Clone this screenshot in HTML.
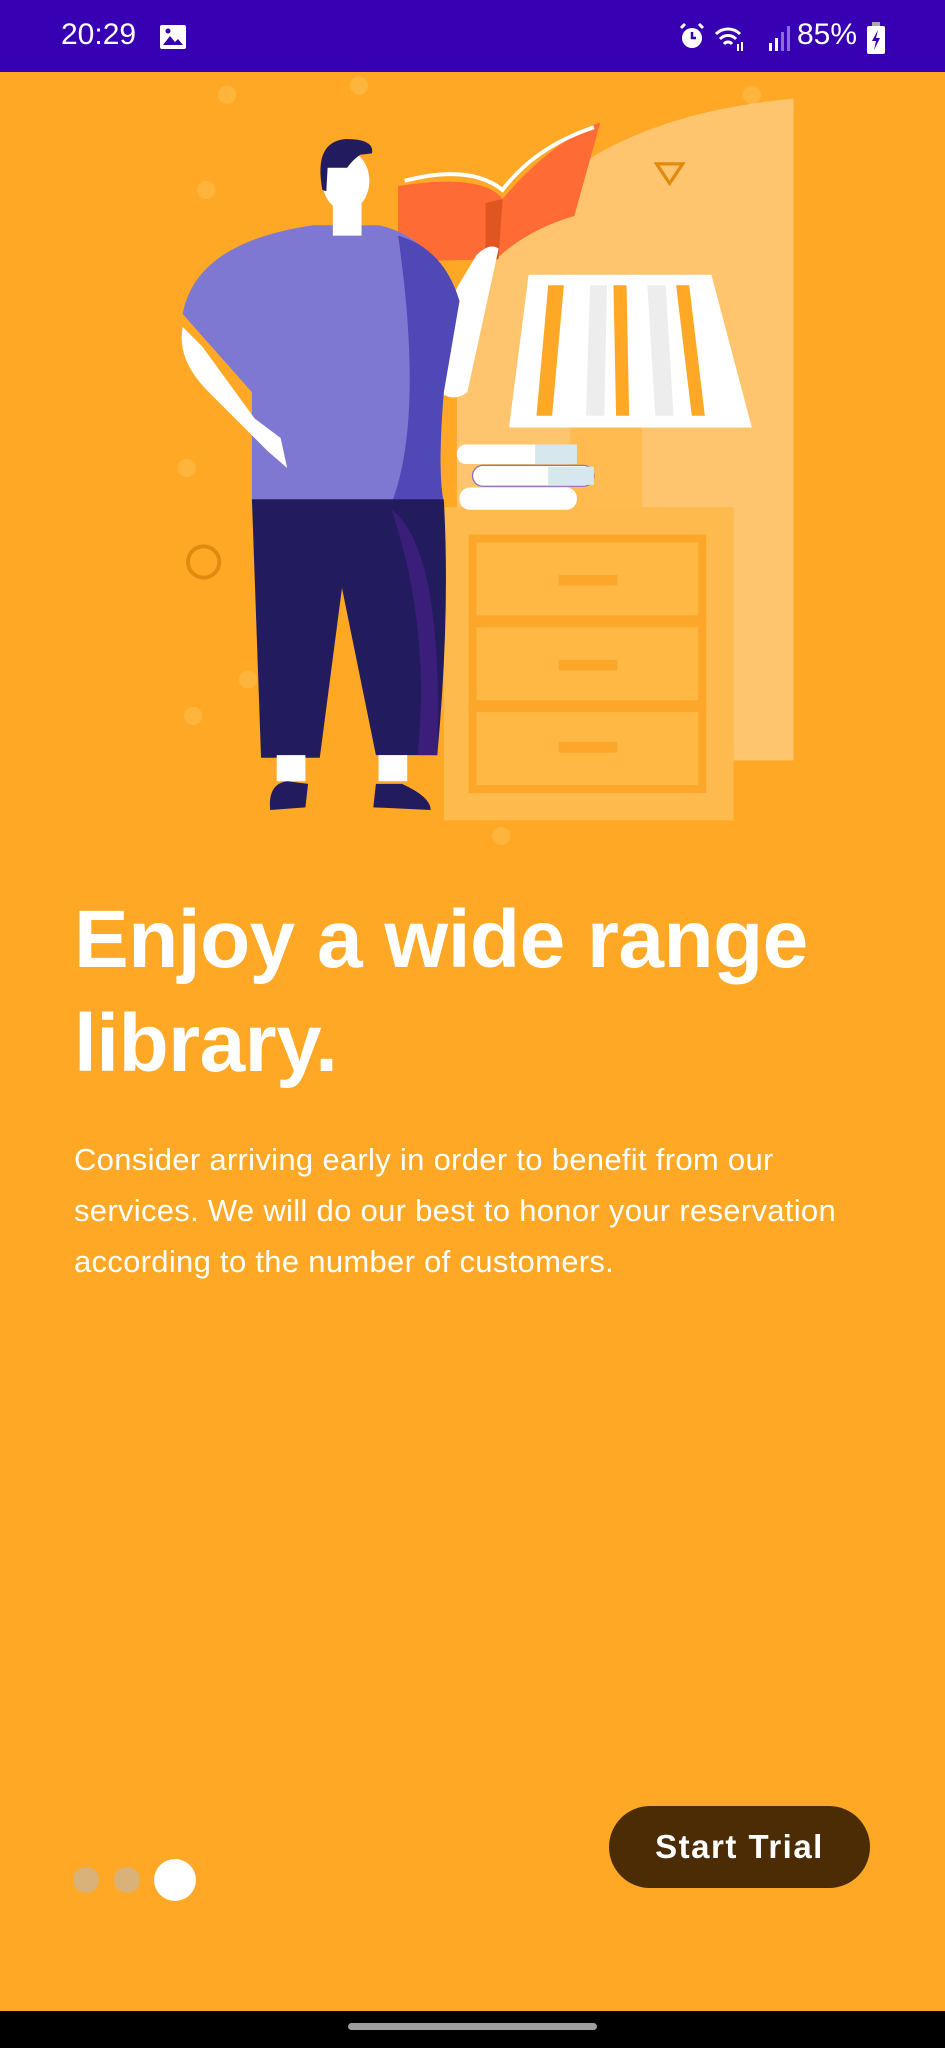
<!DOCTYPE html>
<html><head><meta charset="utf-8"><style>
html,body{margin:0;padding:0}
body{width:945px;height:2048px;position:relative;overflow:hidden;background:#FEA825;font-family:"Liberation Sans",Roboto,sans-serif;color:#fff}
.sb{position:absolute;left:0;top:0;width:945px;height:72px;background:#3700B3}
.t{position:absolute;left:61px;top:18px;font-size:30px;color:#fff}
.pct{position:absolute;left:797px;top:18px;font-size:30px}
h1{position:absolute;left:74px;top:888px;margin:0;font-size:82px;line-height:104px;font-weight:bold;letter-spacing:-0.5px}
p{position:absolute;left:74px;top:1134px;margin:0;font-size:31px;letter-spacing:0.3px;line-height:51px;width:870px;white-space:nowrap}
.btn{position:absolute;left:609px;top:1806px;width:261px;height:82px;border-radius:41px;background:#4B2C05;color:#fff;font-size:33px;font-weight:bold;letter-spacing:1.5px;text-align:center;line-height:82px}
.d{position:absolute;border-radius:50%}
.nav{position:absolute;left:0;top:2011px;width:945px;height:37px;background:#000}
.pill{position:absolute;left:348px;top:2023px;width:249px;height:7px;border-radius:4px;background:#9e9e9e}
</style></head><body>
<div class="sb"></div>
<div class="t">20:29</div>
<svg style="position:absolute;left:159px;top:24px" width="28" height="26" viewBox="0 0 28 26"><rect x="1" y="1" width="26" height="24" rx="2" fill="#fff"/><path d="M4 21 L11 12 L16 18 L19 15 L24 21Z" fill="#3700B3"/><circle cx="9" cy="7" r="2.5" fill="#3700B3"/></svg>
<svg style="position:absolute;left:676px;top:20px" width="120" height="34" viewBox="0 0 120 34">
<circle cx="16" cy="18" r="10" fill="#fff"/><path d="M16 12v6h4" stroke="#3700B3" stroke-width="2.5" fill="none"/><path d="M5 8l4-4M27 8l-4-4" stroke="#fff" stroke-width="3"/>
<path d="M40 14a17 17 0 0 1 24 0M44 19a11 11 0 0 1 16 0M48 24a5 5 0 0 1 8 0" stroke="#fff" stroke-width="3" fill="none"/>
<rect x="61" y="24" width="2" height="7" fill="#fff"/><rect x="65" y="22" width="2" height="9" fill="#fff"/>
<rect x="93" y="23" width="3" height="8" fill="#fff"/><rect x="99" y="18" width="3" height="13" fill="#fff"/><rect x="105" y="12" width="3" height="19" fill="#8a6fd0"/><rect x="111" y="6" width="3" height="25" fill="#8a6fd0"/>
</svg>
<div class="pct">85%</div>
<svg style="position:absolute;left:867px;top:22px" width="18" height="32" viewBox="0 0 18 32"><rect x="5" y="0" width="8" height="4" fill="#aaa"/><rect x="0" y="4" width="18" height="28" rx="2" fill="#fff"/><path d="M11 8 L5 19 H9 L7 28 L13 16 H9Z" fill="#3700B3"/></svg>

<svg style="position:absolute;left:0;top:0" width="945" height="2048" viewBox="0 0 724 1568">
<g fill="#FFB53C"><circle cx="174" cy="72" r="7"/><circle cx="275" cy="65" r="7"/><circle cx="158" cy="145" r="7"/><circle cx="576" cy="72" r="7"/><circle cx="143" cy="358" r="7"/><circle cx="190" cy="520" r="7"/><circle cx="148" cy="548" r="7"/><circle cx="384" cy="640" r="7"/></g>
<circle cx="156" cy="430" r="12" fill="none" stroke="#E08A10" stroke-width="3"/>
<path d="M350 582 L350 265 Q390 95 608 75 L608 582 Z" fill="#FFC56E"/>
<path d="M503 125 L523 125 L513 140Z" fill="none" stroke="#E08A10" stroke-width="2.5"/>
<rect x="437" y="325" width="55" height="70" fill="#FFBA50"/>
<rect x="340" y="388" width="222" height="240" fill="#FFBA4E"/>
<g fill="#FFB844" stroke="#FCA62A" stroke-width="6"><rect x="362" y="412" width="176" height="62"/><rect x="362" y="477" width="176" height="62"/><rect x="362" y="542" width="176" height="62"/></g>
<g fill="#FCA62A"><rect x="428" y="440" width="45" height="8"/><rect x="428" y="505" width="45" height="8"/><rect x="428" y="568" width="45" height="8"/></g>
<path d="M405 210 L545 210 L576 327 L390 327Z" fill="#fff"/>
<g fill="#FEA825"><path d="M420 218 L432 218 L423 318 L411 318Z"/><path d="M470 218 L480 218 L482 318 L472 318Z"/><path d="M518 218 L528 218 L540 318 L530 318Z"/></g>
<g fill="#EDEDED"><path d="M452 218 L465 218 L463 318 L449 318Z"/><path d="M496 218 L510 218 L516 318 L502 318Z"/></g>
<rect x="350" y="340" width="92" height="15" rx="7" fill="#fff"/><rect x="410" y="340" width="32" height="15" fill="#D6E7EE"/>
<rect x="362" y="356" width="93" height="16" rx="8" fill="#fff" stroke="#8B6FC8" stroke-width="1"/><rect x="420" y="357" width="35" height="14" fill="#D6E7EE"/>
<rect x="352" y="373" width="90" height="17" rx="8" fill="#fff"/>
<path d="M305 142 Q370 132 385 152 Q420 110 460 93 L440 165 Q405 175 380 198 L305 200Z" fill="#FF6B35"/>
<path d="M372 155 L385 152 L382 198 L372 200Z" fill="#E05520"/>
<path d="M310 138 Q360 125 385 145 Q410 112 455 97" stroke="#fff" stroke-width="3" fill="none"/>
<path d="M365 195 Q375 185 382 190 L358 300 Q345 310 332 295 L350 220Z" fill="#fff"/>
<path d="M140 240 Q150 185 240 172 L290 172 Q330 180 352 230 L340 300 Q335 360 340 385 L193 385 L193 300 Z" fill="#7F78D2"/>
<path d="M305 180 Q340 190 352 230 L340 300 Q335 360 340 385 L300 385 Q325 320 305 180Z" fill="#5148B8"/>
<path d="M140 250 Q135 275 160 300 L205 345 L220 358 L215 335 L195 320 L155 265Z" fill="#fff"/>
<rect x="255" y="150" width="22" height="30" fill="#fff"/>
<ellipse cx="265" cy="138" rx="18" ry="23" fill="#fff"/>
<path d="M247 145 Q240 108 265 106 Q287 106 285 117 L276 118 Q270 122 266 128 L251 128 L250 146Z" fill="#221C5E"/>
<path d="M193 382 L340 382 Q345 470 335 578 L288 578 L262 450 L245 580 L200 580Z" fill="#221C5E"/>
<path d="M300 390 Q340 420 335 578 L320 578 Q330 480 300 390Z" fill="#3A1E7A"/>
<rect x="212" y="578" width="22" height="20" fill="#fff"/><rect x="290" y="578" width="22" height="20" fill="#fff"/>
<path d="M207 620 Q205 600 220 598 L236 600 L234 618Z" fill="#221C5E"/>
<path d="M286 618 L288 600 L308 600 Q330 610 330 620Z" fill="#221C5E"/>
</svg>

<h1>Enjoy a wide range<br>library.</h1>
<p>Consider arriving early in order to benefit from our<br>services. We will do our best to honor your reservation<br>according to the number of customers.</p>
<div class="btn">Start Trial</div>
<div class="d" style="left:73px;top:1867px;width:26px;height:26px;background:#D9B27A"></div>
<div class="d" style="left:114px;top:1867px;width:26px;height:26px;background:#D9B27A"></div>
<div class="d" style="left:154px;top:1859px;width:42px;height:42px;background:#fff"></div>
<div class="nav"></div><div class="pill"></div>
</body></html>
